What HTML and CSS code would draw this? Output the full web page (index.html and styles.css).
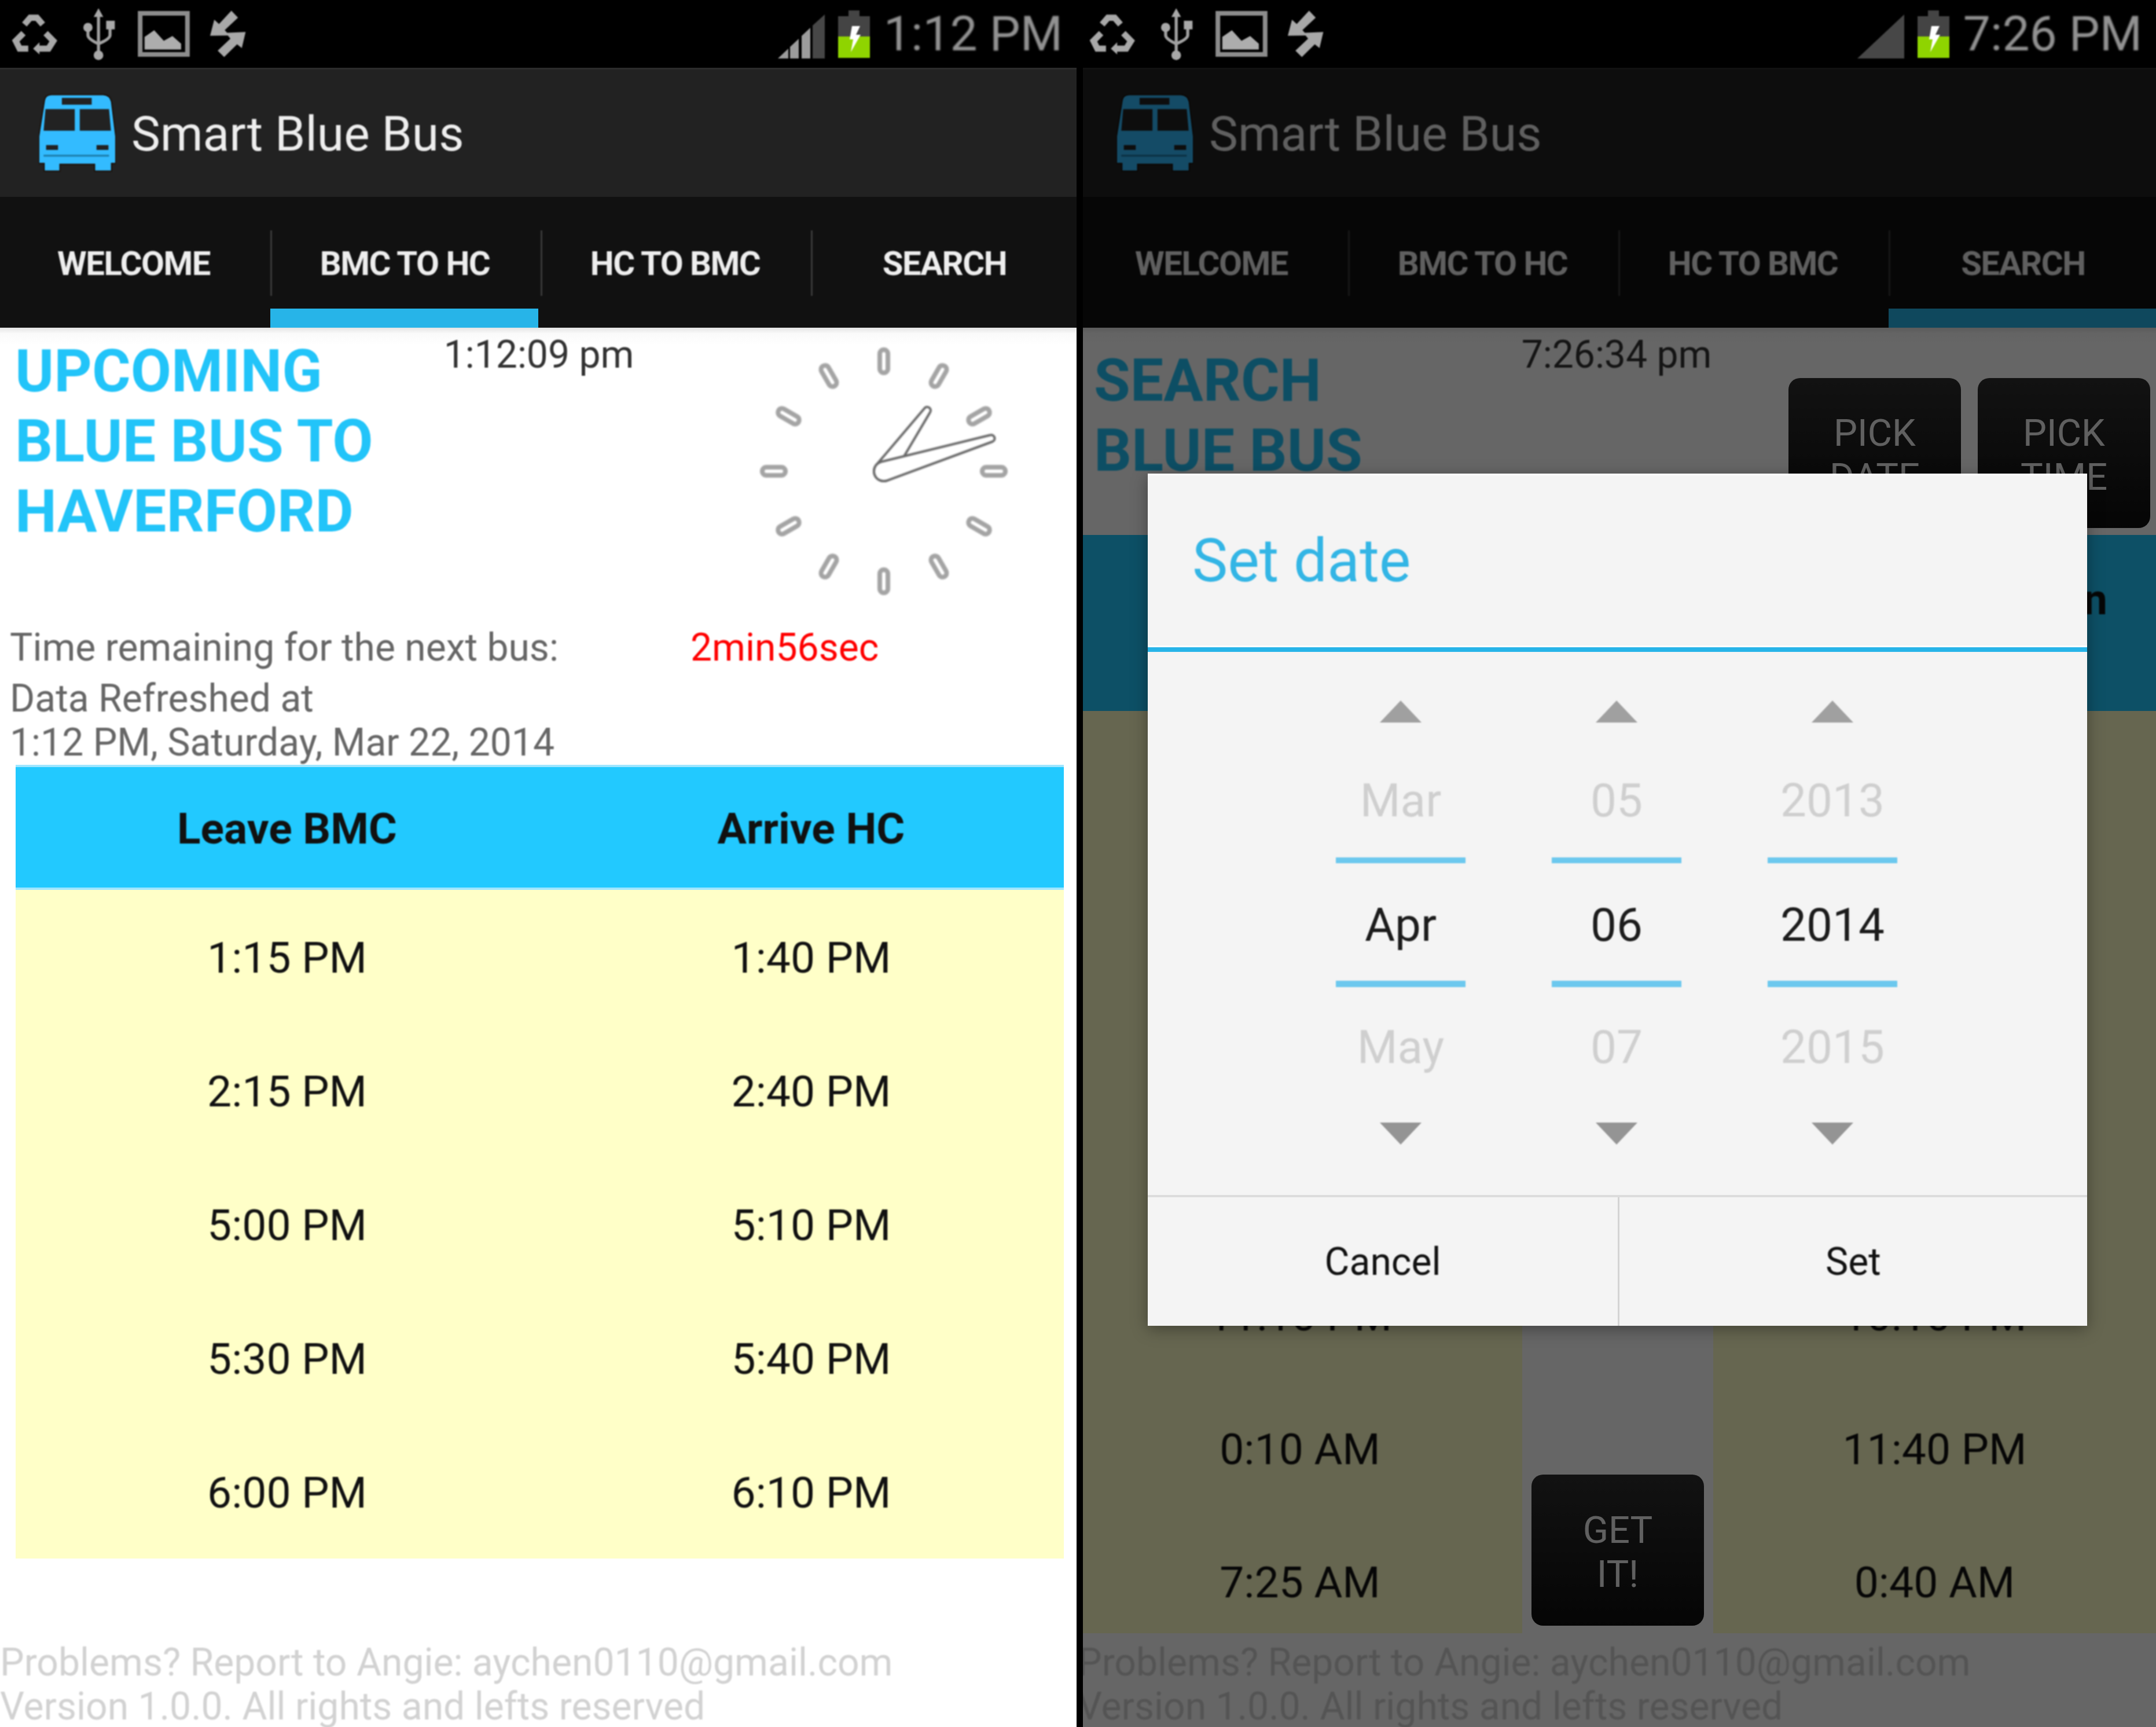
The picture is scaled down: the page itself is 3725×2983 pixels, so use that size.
FILE: index.html
```html
<!DOCTYPE html>
<html lang="en">
<head>
  <meta charset="UTF-8" />
  <title>Smart Blue Bus</title>
  <link rel="stylesheet" href="styles.css">
</head>
<body>
  <!-- left phone: upcoming buses -->
  <div class="phone">
    <div class="status-bar">
      <svg class="ic-recycle" viewBox="55 65 245 210"><g fill="none" stroke="#a8a8a8" stroke-width="32"><path d="M130 120 L160 85 H195 L225 120"/><path d="M125 165 L85 205 L105 245 H150"/><path d="M240 165 L280 205 L255 245 H200"/></g><path d="M208 212 L175 245 L208 275Z" fill="#a8a8a8"/></svg>
      <svg class="ic-usb" viewBox="425 40 175 270"><g fill="none" stroke="#a0a0a0" stroke-width="16"><path d="M510 70V285"/><path d="M455 140V180Q455 200 510 225"/><path d="M570 130V180Q570 200 510 225"/></g><g fill="#a8a8a8"><path d="M510 40L535 85H485Z"/><circle cx="455" cy="140" r="24"/><rect x="550" y="105" width="45" height="45"/><circle cx="510" cy="285" r="25"/></g></svg>
      <svg class="ic-pic" viewBox="715 50 270 238"><rect x="727" y="62" width="246" height="214" fill="#000" stroke="#8c8c8c" stroke-width="24"/><path d="M750 250V185L800 150L850 205L895 180L940 220V250Z" fill="#adadad"/></svg>
      <svg class="ic-sync" viewBox="1085 45 192 250"><path fill="#a8a8a8" d="M1200 48L1235 85L1165 150L1190 178L1088 180L1110 95L1135 118Z"/><path fill="#a8a8a8" d="M1162 292L1128 258L1195 195L1170 165L1275 160L1255 245L1230 225Z"/></svg>
      <div class="status-right">
        <svg class="ic-signal" viewBox="0 0 81 76"><path fill="#9c9c9c" d="M0 76L18 59V76Z"/><path fill="#9c9c9c" d="M21 56L36 42V76H21Z"/><path fill="#9c9c9c" d="M41 37L56 23V76H41Z"/><path fill="#474747" d="M60 19L81 0V76H60Z"/></svg>
        <svg class="ic-battery" viewBox="0 0 55 82"><path fill="#444" d="M18 0H37V10H55V45H0V10H18Z"/><rect y="45" width="55" height="37" fill="#8fd400"/><path fill="#fff" d="M24 27H38L31 42H39L22 72L26 50H20Z"/></svg>
        <span class="status-time">1:12 PM</span>
      </div>
    </div>
    <div class="action-bar">
      <svg class="bus-icon" viewBox="0 0 400 400"><path fill="#33bbff" stroke="#1c1008" stroke-width="6" d="M30 30Q35 5 65 3H335Q370 5 378 40L400 220V360H378V400H290V365H110V400H28V360H0V220Z"/><rect x="120" y="20" width="155" height="35" fill="#222"/><path fill="#222" d="M35 78H187V190H25Z"/><path fill="#222" d="M213 78H365L375 190H213Z"/><rect x="38" y="265" width="62" height="25" fill="#222"/><rect x="300" y="265" width="62" height="25" fill="#222"/><rect x="25" y="315" width="340" height="10" fill="#1d7fae"/></svg>
      <span class="app-title">Smart Blue Bus</span>
    </div>
    <div class="tabs">
      <div class="tab"><div class="tab-label">WELCOME</div><div class="tab-line"></div></div>
      <div class="tab"><div class="tab-label">BMC TO HC</div><div class="tab-line on"></div></div>
      <div class="tab"><div class="tab-label">HC TO BMC</div><div class="tab-line"></div></div>
      <div class="tab"><div class="tab-label">SEARCH</div><div class="tab-line"></div></div>
    </div>
    <div class="content">
      <div class="top-row top-row-upcoming">
        <h1 class="heading">UPCOMING<br>BLUE BUS TO<br>HAVERFORD</h1>
        <div class="clock-text">1:12:09 pm</div>
        <svg class="analog-clock" viewBox="-235 -235 470 470">
          <defs><rect id="tick" x="-7" y="-210" width="14" height="40" rx="7" fill="#fff" stroke="#a4a4a4" stroke-width="8"/></defs>
          <use href="#tick"/><use href="#tick" transform="rotate(30)"/><use href="#tick" transform="rotate(60)"/><use href="#tick" transform="rotate(90)"/><use href="#tick" transform="rotate(120)"/><use href="#tick" transform="rotate(150)"/><use href="#tick" transform="rotate(180)"/><use href="#tick" transform="rotate(210)"/><use href="#tick" transform="rotate(240)"/><use href="#tick" transform="rotate(270)"/><use href="#tick" transform="rotate(300)"/><use href="#tick" transform="rotate(330)"/>
          <path transform="rotate(35.5)" d="M-17 0L-6 -129A6 6 0 0 1 6 -129L17 0A17 17 0 0 1 -17 0Z" fill="#fff" stroke="#666" stroke-width="4"/>
          <path transform="rotate(73)" d="M-17 0L-6 -194A6 6 0 0 1 6 -194L17 0A17 17 0 0 1 -17 0Z" fill="#fff" stroke="#666" stroke-width="4"/>
        </svg>
      </div>
      <div class="info-row"><span class="info-label">Time remaining for the next bus:</span><span class="info-count">2min56sec</span></div>
      <div class="info-line">Data Refreshed at</div>
      <div class="info-line">1:12 PM, Saturday, Mar 22, 2014</div>
      <div class="bus-table">
        <div class="bus-head"><span>Leave BMC</span><span>Arrive HC</span></div>
        <div class="bus-row"><span>1:15 PM</span><span>1:40 PM</span></div>
        <div class="bus-row"><span>2:15 PM</span><span>2:40 PM</span></div>
        <div class="bus-row"><span>5:00 PM</span><span>5:10 PM</span></div>
        <div class="bus-row"><span>5:30 PM</span><span>5:40 PM</span></div>
        <div class="bus-row"><span>6:00 PM</span><span>6:10 PM</span></div>
      </div>
      <div class="footer footer-upcoming">Problems? Report to Angie: aychen0110@gmail.com<br>Version 1.0.0. All rights and lefts reserved</div>
    </div>
  </div>

  <!-- right phone: search with date dialog open -->
  <div class="phone phone-right">
    <div class="phone-inner">
      <div class="status-bar">
        <svg class="ic-recycle" viewBox="55 65 245 210"><g fill="none" stroke="#a8a8a8" stroke-width="32"><path d="M130 120 L160 85 H195 L225 120"/><path d="M125 165 L85 205 L105 245 H150"/><path d="M240 165 L280 205 L255 245 H200"/></g><path d="M208 212 L175 245 L208 275Z" fill="#a8a8a8"/></svg>
        <svg class="ic-usb" viewBox="425 40 175 270"><g fill="none" stroke="#a0a0a0" stroke-width="16"><path d="M510 70V285"/><path d="M455 140V180Q455 200 510 225"/><path d="M570 130V180Q570 200 510 225"/></g><g fill="#a8a8a8"><path d="M510 40L535 85H485Z"/><circle cx="455" cy="140" r="24"/><rect x="550" y="105" width="45" height="45"/><circle cx="510" cy="285" r="25"/></g></svg>
        <svg class="ic-pic" viewBox="715 50 270 238"><rect x="727" y="62" width="246" height="214" fill="#000" stroke="#8c8c8c" stroke-width="24"/><path d="M750 250V185L800 150L850 205L895 180L940 220V250Z" fill="#adadad"/></svg>
        <svg class="ic-sync" viewBox="1085 45 192 250"><path fill="#a8a8a8" d="M1200 48L1235 85L1165 150L1190 178L1088 180L1110 95L1135 118Z"/><path fill="#a8a8a8" d="M1162 292L1128 258L1195 195L1170 165L1275 160L1255 245L1230 225Z"/></svg>
        <div class="status-right">
          <svg class="ic-signal" viewBox="0 0 81 76"><path fill="#474747" d="M0 76L81 0V76Z"/></svg>
          <svg class="ic-battery" viewBox="0 0 55 82"><path fill="#444" d="M18 0H37V10H55V45H0V10H18Z"/><rect y="45" width="55" height="37" fill="#8fd400"/><path fill="#fff" d="M24 27H38L31 42H39L22 72L26 50H20Z"/></svg>
          <span class="status-time">7:26 PM</span>
        </div>
      </div>
      <div class="action-bar">
        <svg class="bus-icon" viewBox="0 0 400 400"><path fill="#33bbff" stroke="#1c1008" stroke-width="6" d="M30 30Q35 5 65 3H335Q370 5 378 40L400 220V360H378V400H290V365H110V400H28V360H0V220Z"/><rect x="120" y="20" width="155" height="35" fill="#222"/><path fill="#222" d="M35 78H187V190H25Z"/><path fill="#222" d="M213 78H365L375 190H213Z"/><rect x="38" y="265" width="62" height="25" fill="#222"/><rect x="300" y="265" width="62" height="25" fill="#222"/><rect x="25" y="315" width="340" height="10" fill="#1d7fae"/></svg>
        <span class="app-title">Smart Blue Bus</span>
      </div>
      <div class="tabs">
        <div class="tab"><div class="tab-label">WELCOME</div><div class="tab-line"></div></div>
        <div class="tab"><div class="tab-label">BMC TO HC</div><div class="tab-line"></div></div>
        <div class="tab"><div class="tab-label">HC TO BMC</div><div class="tab-line"></div></div>
        <div class="tab"><div class="tab-label">SEARCH</div><div class="tab-line on"></div></div>
      </div>
      <div class="content">
        <div class="top-row top-row-search">
          <h1 class="heading heading-search">SEARCH<br>BLUE BUS</h1>
          <div class="clock-text">7:26:34 pm</div>
          <div class="pick-group">
            <div class="dark-btn">PICK<br>DATE</div>
            <div class="dark-btn">PICK<br>TIME</div>
          </div>
        </div>
        <div class="search-head"><span class="search-head-cell">Arrive Station</span></div>
        <div class="search-body">
          <div class="search-col">
            <div class="search-cell"></div>
            <div class="search-cell"></div>
            <div class="search-cell"></div>
            <div class="search-cell"></div>
            <div class="search-cell"><span>11:10 PM</span></div>
            <div class="search-cell"><span>0:10 AM</span></div>
            <div class="search-cell"><span>7:25 AM</span></div>
          </div>
          <div class="search-mid"><div class="dark-btn get-btn">GET<br>IT!</div></div>
          <div class="search-col">
            <div class="search-cell"></div>
            <div class="search-cell"></div>
            <div class="search-cell"></div>
            <div class="search-cell"></div>
            <div class="search-cell"><span>10:10 PM</span></div>
            <div class="search-cell"><span>11:40 PM</span></div>
            <div class="search-cell"><span>0:40 AM</span></div>
          </div>
        </div>
        <div class="footer">Problems? Report to Angie: aychen0110@gmail.com<br>Version 1.0.0. All rights and lefts reserved</div>
      </div>
      <div class="scrim"></div>
      <div class="dialog">
        <div class="dialog-title"><span>Set date</span></div>
        <div class="picker">
          <div class="picker-col">
            <div class="arrow-up"></div><div class="picker-prev">Mar</div><div class="picker-cur">Apr</div><div class="picker-next">May</div><div class="arrow-down"></div>
          </div>
          <div class="picker-col">
            <div class="arrow-up"></div><div class="picker-prev">05</div><div class="picker-cur">06</div><div class="picker-next">07</div><div class="arrow-down"></div>
          </div>
          <div class="picker-col">
            <div class="arrow-up"></div><div class="picker-prev">2013</div><div class="picker-cur">2014</div><div class="picker-next">2015</div><div class="arrow-down"></div>
          </div>
        </div>
        <div class="dialog-btns"><div class="dialog-btn"><span>Cancel</span></div><div class="dialog-btn"><span>Set</span></div></div>
      </div>
    </div>
  </div>
</body>
</html>
```

FILE: styles.css
```css
html, body {
  margin: 0;
  height: 2983px;
  background-color: #000;
}

body {
  display: flex;
  width: 3725px;
  overflow: hidden;
  font-family: Roboto, "Liberation Sans", sans-serif;
}

.phone {
  width: 1860px;
  height: 2983px;
  overflow: hidden;
  flex: none;
}

.phone-right {
  width: 1854px;
  margin-left: 11px;
}

.phone-inner {
  position: relative;
  width: 1863px;
  height: 2983px;
  margin-left: -9px;
}

/* the reference is an upscaled capture, so text and icons are a bit soft */
.status-bar > *, .status-time, .app-title, .bus-icon, .tab-label, .heading, .clock-text,
.info-row, .info-line, .bus-head span, .bus-row span, .footer, .search-head-cell,
.search-cell span, .dialog-title span, .picker-col, .dialog-btn span {
  filter: blur(1px);
}

/* status bar */
.status-bar {
  display: flex;
  align-items: center;
  height: 117px;
  padding: 0 24px 0 17px;
  background-color: #000;
}

.ic-recycle { width: 82px; height: 70px; }
.ic-usb { width: 58px; height: 90px; margin-left: 43px; }
.ic-pic { width: 90px; height: 79px; margin-left: 38px; }
.ic-sync { width: 63px; height: 83px; margin-left: 34px; }

.status-right {
  display: flex;
  align-items: center;
  margin-left: auto;
}

.ic-signal { width: 81px; height: 76px; margin-top: 9px; }
.ic-battery { width: 55px; height: 82px; margin-left: 23px; margin-top: 1px; }

.status-time {
  margin-left: 24px;
  font-size: 84px;
  color: #929292;
}

/* action bar and tabs */
.action-bar {
  display: flex;
  align-items: center;
  height: 223px;
  box-sizing: border-box;
  padding-left: 67px;
  background-color: #222;
  border-top: 3px solid #2c2c2c;
}

.bus-icon { width: 133px; height: 138px; margin-top: -3px; }

.app-title {
  margin: 3px 0 0 27px;
  font-size: 84px;
  color: #eee;
}

.tabs {
  display: flex;
  height: 226px;
  background-color: #111;
}

.tab {
  flex: none;
  width: 467px;
  display: flex;
  flex-direction: column;
}

.tab:last-child {
  flex: 1;
}

.tab-label {
  display: flex;
  align-items: center;
  justify-content: center;
  height: 113px;
  box-sizing: border-box;
  padding-right: 5px;
  margin-top: 58px;
  font-size: 58px;
  font-weight: 700;
  letter-spacing: -1.5px;
  color: #eee;
}

.tab:last-child .tab-label {
  padding-right: 0;
}

.tab + .tab .tab-label {
  border-left: 3px solid #3a3a3a;
}

.tab-line {
  height: 33px;
  margin-top: 22px;
}

.tab-line.on {
  margin-right: 4px;
  background-color: #27b4e8;
}

.tab:last-child .tab-line.on {
  margin-right: 0;
}

/* page content */
.content {
  height: 2417px;
  background: linear-gradient(#e4e4e4, #fafafa 10px, #fff 30px);
}

.top-row {
  display: flex;
}

.top-row-upcoming { height: 515px; }
.top-row-search { height: 358px; }

.heading {
  width: 735px;
  flex: none;
  margin: 15px 0 0 26px;
  font-size: 102px;
  line-height: 121px;
  font-weight: 700;
  color: #22c4f9;
}

.heading-search {
  width: 733px;
  margin: 31px 0 0 28px;
}

.clock-text {
  width: 340px;
  flex: none;
  margin-top: 9px;
  text-align: center;
  font-size: 66px;
  line-height: 75px;
  color: #333;
}

.analog-clock {
  width: 470px;
  height: 470px;
  margin: 13px 0 0 191px;
  filter: blur(1.5px);
}

.pick-group {
  display: flex;
  gap: 29px;
  margin: 87px 0 0 127px;
}

.dark-btn {
  display: flex;
  align-items: center;
  justify-content: center;
  text-align: center;
  width: 298px;
  height: 259px;
  box-sizing: border-box;
  padding-top: 6px;
  border-radius: 20px;
  background: linear-gradient(#2e2e2e, #0e0e0e);
  font-size: 65px;
  line-height: 76px;
  color: #f0f0f0;
}

.info-row {
  display: flex;
  height: 88px;
  padding-left: 17px;
  font-size: 66px;
  line-height: 75px;
  color: #666;
}

.info-label { width: 1176px; flex: none; }
.info-count { color: #f00; }

.info-line {
  height: 76px;
  padding-left: 17px;
  font-size: 66px;
  line-height: 75px;
  color: #666;
}

/* upcoming table */
.bus-table {
  margin: 0 22px 0 27px;
}

.bus-head, .bus-row {
  display: grid;
  grid-template-columns: 938px 1fr;
  align-items: center;
  box-sizing: border-box;
  text-align: center;
  font-size: 75px;
  color: #111;
}

.bus-head {
  height: 216px;
  padding-top: 4px;
  background-color: #22c9ff;
  border-top: 4px solid #9fe6ff;
  border-bottom: 4px solid #9fe6ff;
  font-weight: 700;
}

.bus-row {
  height: 231px;
  padding-top: 3px;
  background-color: #ffffc8;
}

.footer {
  margin-top: 13px;
  font-size: 66px;
  line-height: 76px;
  color: #d2d2d2;
}

.footer-upcoming {
  margin-top: 142px;
}

/* search table */
.search-head {
  display: flex;
  justify-content: flex-end;
  height: 304px;
  box-sizing: border-box;
  padding: 68px 84px 0 0;
  background-color: #22c9ff;
  font-size: 74px;
  line-height: 87px;
  font-weight: 700;
  color: #111;
}

.search-body {
  display: grid;
  grid-template-columns: 768px 330px 765px;
  grid-template-rows: 1593px;
  height: 1593px;
  overflow: hidden;
}

.search-col {
  overflow: hidden;
  background-color: #ffffc8;
  padding-top: 7px;
}

.search-cell {
  display: flex;
  align-items: center;
  justify-content: center;
  height: 230.5px;
  font-size: 75px;
  color: #111;
}

.search-mid {
  display: flex;
  flex-direction: column;
  justify-content: flex-end;
  align-items: center;
  padding-bottom: 13px;
}

.get-btn {
  height: 261px;
}

/* date dialog */
.scrim {
  position: absolute;
  top: 117px;
  left: 0;
  right: 0;
  bottom: 0;
  background-color: rgba(0, 0, 0, 0.6);
}

.dialog {
  position: absolute;
  top: 818px;
  left: 121px;
  width: 1623px;
  height: 1472px;
  background-color: #f4f4f4;
  box-shadow: inset 0 3px 0 #fff, 0 6px 26px rgba(0, 0, 0, 0.35);
}

.dialog-title {
  display: flex;
  align-items: center;
  height: 300px;
  box-sizing: border-box;
  padding: 4px 0 0 77px;
  border-bottom: 3px solid #fff;
  font-size: 103px;
  color: #33b5e5;
}

.picker {
  display: flex;
  gap: 149px;
  height: 946px;
  box-sizing: border-box;
  padding: 84px 0 0 325px;
  border-top: 8px solid #27b4e8;
  text-align: center;
  font-size: 80px;
}

.picker-col {
  width: 224px;
}

.arrow-up, .arrow-down {
  width: 0;
  margin: 0 auto;
  border-left: 36px solid transparent;
  border-right: 36px solid transparent;
}

.arrow-up { border-bottom: 38px solid #a0a0a0; }
.arrow-down { border-top: 38px solid #949494; }

.picker-prev, .picker-next {
  color: #cfcfcf;
}

.picker-prev {
  height: 193px;
  padding-top: 40px;
  line-height: 190px;
}

.picker-cur {
  height: 203px;
  line-height: 214px;
  color: #1c1c1c;
  border-top: 10px solid #6cc8ee;
  border-bottom: 11px solid #6cc8ee;
}

.picker-next {
  height: 234px;
  line-height: 208px;
}

.dialog-btns {
  display: flex;
  height: 222px;
  border-top: 4px solid #dcdcdc;
  font-size: 66px;
  color: #111;
}

.dialog-btn {
  flex: 1;
  display: flex;
  align-items: center;
  justify-content: center;
}

.dialog-btn:first-child {
  flex: none;
  width: 812px;
  border-right: 3px solid #d4d4d4;
}
```
